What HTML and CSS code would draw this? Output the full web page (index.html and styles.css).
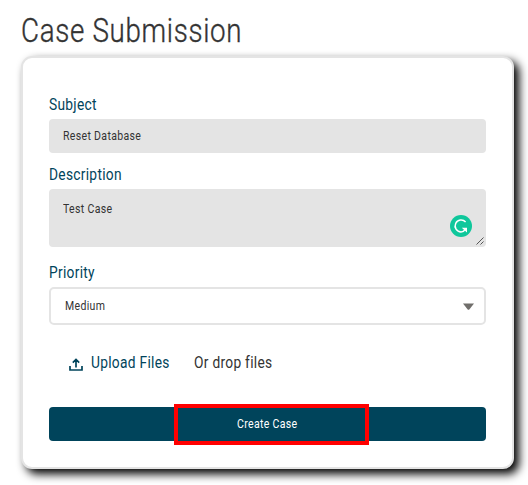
FILE: index.html
```html
<!DOCTYPE html>
<html lang="en">
<head>
<meta charset="utf-8">
<title>Case Submission</title>
<link rel="stylesheet" href="styles.css">
</head>
<body>
<h1 class="title"><span class="t t-title">Case Submission</span></h1>
<main class="card">
  <div class="label"><span class="t t-subject">Subject</span></div>
  <div class="field input"><span class="t t-reset">Reset Database</span></div>
  <div class="label label-desc"><span class="t t-desc">Description</span></div>
  <div class="field textarea">
    <span class="t t-test">Test Case</span>
    <svg class="assistant" viewBox="0 0 22 22"><circle cx="11" cy="11" r="11" fill="#0fc79b"/><path d="M15.6 7A6 6 0 1 0 11 17Q13.6 17 15 14.6" fill="none" stroke="#fff" stroke-width="1.5"/><path d="M11.8 12.8H17V17.6L15.6 16.2L13.4 14.2Z" fill="#fff"/></svg>
    <svg class="grip" viewBox="0 0 8 8"><path d="M.5 7.5L7.5 .5M4.5 7.5L7.5 4.5" stroke="#555" stroke-width="1" fill="none"/></svg>
  </div>
  <div class="label label-priority"><span class="t t-priority">Priority</span></div>
  <div class="select"><span class="t t-medium">Medium</span><svg class="caret" viewBox="0 0 11 7"><path d="M0 .5H11L6.5 6.2Q5.5 7.2 4.5 6.2Z" fill="#706e6b"/></svg></div>
  <div class="upload">
    <svg class="upload-icon" viewBox="0 0 14 13"><path d="M1 8V12H13V8M7 9.5V1.5M3.8 4.6L7 1.5L10.2 4.6" fill="none" stroke="#00445b" stroke-width="1.7"/></svg>
    <span class="upload-link"><span class="t t-upload">Upload Files</span></span>
    <span class="t t-drop">Or drop files</span>
  </div>
  <div class="button"><span class="t t-create">Create Case</span><div class="highlight"></div></div>
</main>
</body>
</html>
```

FILE: styles.css
```css
* { box-sizing: border-box; }
body { margin: 0; width: 528px; height: 485px; overflow: hidden; background: #fff; color: #333; font-family: Roboto, "Liberation Sans", sans-serif; }
.t { display: inline-block; white-space: nowrap; transform-origin: 0 50%; }
.title { margin: 0; height: 56px; padding: 10px 0 0 20.5px; font-size: 34px; line-height: 40px; font-weight: 300; -webkit-text-stroke: .4px #333; }
.card { width: 493px; height: 413px; margin-left: 21px; padding: 36px 26px 0; border: 2px solid #e4e4e4; border-radius: 11px; background: #fff; box-shadow: 5px 5px 10px #000; }
.label { height: 25px; line-height: 20px; font-size: 17px; color: #00445b; }
.label-desc { margin-top: 11px; }
.label-priority { margin-top: 15px; }
.field { position: relative; background: #e4e4e4; border-radius: 4px; padding-left: 14px; font-size: 13px; }
.input { height: 34px; line-height: 34px; }
.textarea { height: 58px; line-height: 39px; }
.assistant { position: absolute; left: 401px; top: 26px; width: 22px; height: 22px; }
.grip { position: absolute; right: 2px; bottom: 2px; width: 8px; height: 8px; }
.select { display: flex; align-items: center; justify-content: space-between; height: 38px; padding: 0 10px 0 14px; border: 2px solid #e4e4e4; border-radius: 5px; font-size: 13px; line-height: 15px; }
.t-medium { margin-top: -2px; }
.caret { width: 11px; height: 7px; }
.upload { display: flex; align-items: center; height: 40px; margin-top: 17px; padding-left: 20px; font-size: 17px; line-height: 22px; }
.upload-icon { width: 14px; height: 13px; margin: 4px 8px 0 0; }
.upload-link { width: 103px; color: #00445b; }
.button { position: relative; display: flex; height: 34px; margin-top: 25px; padding-left: 188px; background: #00445b; border-radius: 4px; color: #fff; font-size: 13px; line-height: 34px; }
.highlight { position: absolute; left: 125px; top: -3px; width: 195px; height: 41px; border: 4px solid #f00; }
.t-title { transform: scaleX(.815); letter-spacing: .85px; }
.t-subject, .t-desc, .t-priority, .t-upload, .t-drop { transform: scaleX(.81); letter-spacing: .35px; }
.t-reset, .t-test, .t-medium, .t-create { transform: scaleX(.81); letter-spacing: .4px; }
```
